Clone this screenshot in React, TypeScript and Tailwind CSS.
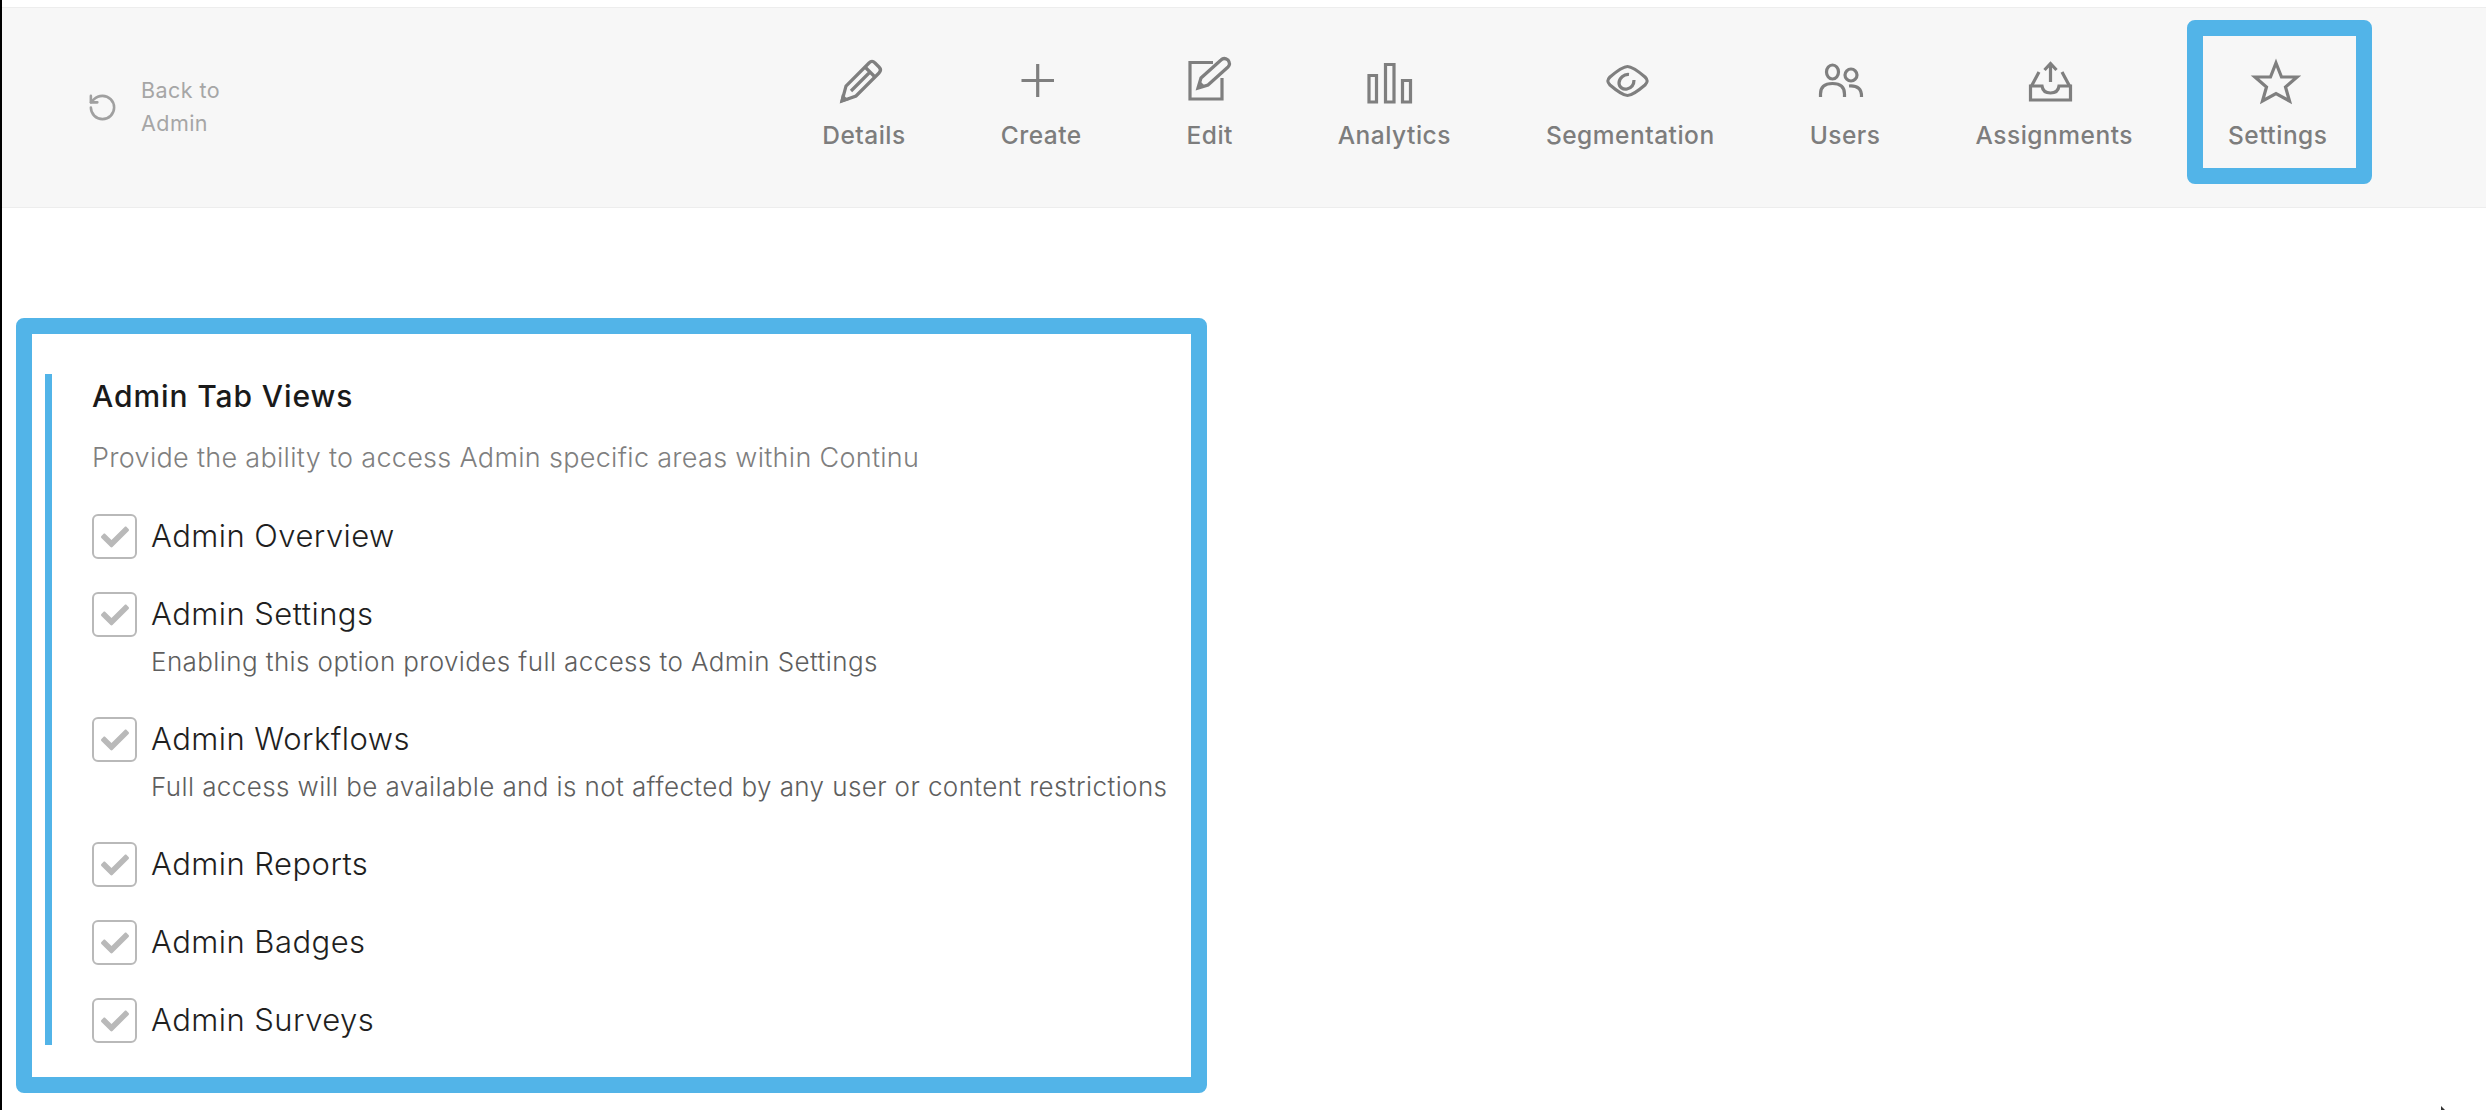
import { RotateCcw } from "lucide-react";
import { FaCheck } from "react-icons/fa";
import type { ReactNode } from "react";

const iconProps = {
  viewBox: "0 0 56 48",
  fill: "none",
  stroke: "#7f7f7f",
  strokeWidth: 3.2,
  className: "h-12 w-14 overflow-visible",
};

const navItems: { label: string; icon: ReactNode }[] = [
  {
    label: "Details",
    icon: (
      <svg {...iconProps}>
        <path d="M6 43 L10 28 L33 5 Q36 2 39 5 L43 9 Q46 12 43 15 L20 38 Z" />
        <path d="M29 9 L39 19 M15 33 L33 15" />
        <path d="M4 45 L6 36 L13 42 Z" fill="#7f7f7f" stroke="none" />
      </svg>
    ),
  },
  {
    label: "Create",
    icon: (
      <svg {...iconProps}>
        <path d="M24.7 6 V39 M8.5 22.5 H41" />
      </svg>
    ),
  },
  {
    label: "Edit",
    icon: (
      <svg {...iconProps}>
        <path d="M31 4.5 H8 V41 H40 V20" />
        <path d="M16 30 L19 20 L39 2 Q42 -1 46 2 Q49 6 46 9 L26 27 Z" />
        <path d="M15 31 L18 23 L23 28 Z" fill="#7f7f7f" stroke="none" />
      </svg>
    ),
  },
  {
    label: "Analytics",
    icon: (
      <svg {...iconProps}>
        <path d="M3 17.5 H10.5 V44 H3 Z M19.5 6.5 H28 V44 H19.5 Z M36.5 22.5 H44.5 V44 H36.5 Z" />
      </svg>
    ),
  },
  {
    label: "Segmentation",
    icon: (
      <svg {...iconProps}>
        <path d="M25.5 8.5 C30 8.5 36 13 43 19 C46 22 46 24 43 27 C36 33 30 37.5 25.5 37.5 C21 37.5 15 33 8 27 C5 24 5 22 8 19 C15 13 21 8.5 25.5 8.5 Z" />
        <path d="M27 16.5 C22 16 17 20 17 25 C17 29 21 32 25 31 C29 30 32 27 32 22" />
      </svg>
    ),
  },
  {
    label: "Users",
    icon: (
      <svg {...iconProps}>
        <ellipse cx="15.5" cy="14" rx="6" ry="7" />
        <ellipse cx="34" cy="17" rx="6" ry="6" />
        <path d="M3.5 39 V36 Q3.5 25.5 15.5 25.5 Q27.5 25.5 27.5 36 V39" />
        <path d="M32 28 Q45 27 44.5 39" />
      </svg>
    ),
  },
  {
    label: "Assignments",
    icon: (
      <svg {...iconProps}>
        <path d="M24.5 24 V6 M18.5 12 L24.5 5.5 L30.5 12" />
        <path d="M13 14 L5.5 28 M36 14 L43.5 28" />
        <path d="M4.5 28 V42 H44.5 V28 H33 Q32 35 24.5 35 Q17 35 16 28 Z" />
      </svg>
    ),
  },
  {
    label: "Settings",
    icon: (
      <svg {...iconProps}>
        <path d="M26 5 L31.5 19 L47 19 L35.5 29 L39.5 43 L26 35.5 L12.5 43 L16.5 29 L5 19 L20.5 19 Z" />
      </svg>
    ),
  },
];

const tabViews = [
  { label: "Admin Overview" },
  { label: "Admin Settings", hint: "Enabling this option provides full access to Admin Settings" },
  { label: "Admin Workflows", hint: "Full access will be available and is not affected by any user or content restrictions" },
  { label: "Admin Reports" },
  { label: "Admin Badges" },
  { label: "Admin Surveys" },
];

export default function App() {
  return (
    <div className="relative h-[1110px] border-l-2 border-black bg-white pt-[7px] font-['Inter',sans-serif]">
      {/* Top nav */}
      <header className="flex h-[201px] items-start border-y border-[#ededed] bg-[#f7f7f7] pt-[50px] pr-[111px] pl-[85px]">
        <div className="mt-4 flex items-center gap-[23px] text-[#a6a6a6]">
          <RotateCcw size={31} strokeWidth={2} color="#a0a0a0" />
          <span className="w-[90px] text-[21.5px] leading-[33px] tracking-[0.45px]">Back to Admin</span>
        </div>
        <nav className="ml-auto flex">
          {navItems.map((item) => (
            <div key={item.label} className="relative flex min-w-[161px] flex-col items-center px-[47.5px]">
              {item.label === "Settings" && (
                <div className="absolute -top-[38px] right-[3px] -bottom-[33px] left-[6px] rounded-lg border-[16px] border-[#52b4e8]" />
              )}
              {item.icon}
              <span className="mt-[13px] text-[24.5px] leading-8 font-medium tracking-[0.5px] text-[#7d7d7d]">
                {item.label}
              </span>
            </div>
          ))}
        </nav>
      </header>

      {/* Permissions card */}
      <main className="pt-[110px] pl-[14px]">
        <section className="box-border w-[1191px] rounded-lg border-[16px] border-[#52b4e8] pt-10 pr-2 pb-8 pl-[13px]">
          <div className="border-l-[7px] border-[#52b4e8] pt-1 pl-10">
            <h2 className="text-[30px] leading-9 font-[550] tracking-[0.9px] text-[#1a1a1a]">Admin Tab Views</h2>
            <p className="mt-[26px] text-[27px] leading-9 font-light tracking-[0.3px] text-[#7f7f7f]">
              Provide the ability to access Admin specific areas within Continu
            </p>
            <ul className="mt-[38px] flex flex-col gap-[33px] pb-[2px]">
              {tabViews.map((view) => (
                <li key={view.label} className="flex gap-[14px]">
                  <span className="flex h-[45px] w-[45px] shrink-0 items-center justify-center rounded-md border-2 border-[#b9b9b9] bg-white">
                    <FaCheck size={28} color="#b9b9b9" />
                  </span>
                  <div>
                    <div className="text-[31px] leading-[43px] font-light tracking-[0.45px] text-[#1f1f1f]">
                      {view.label}
                    </div>
                    {view.hint && (
                      <div className="mt-[10px] pb-[5px] text-[26px] leading-[34px] font-light tracking-[0.4px] whitespace-nowrap text-[#5e5e5e]">
                        {view.hint}
                      </div>
                    )}
                  </div>
                </li>
              ))}
            </ul>
          </div>
        </section>
      </main>

      {/* Stray mouse cursor at the bottom edge */}
      <svg viewBox="0 0 6 6" className="absolute top-[1106px] left-[2439px] h-1 w-1">
        <path d="M0 0 L6 6 H0 Z" fill="#333" />
      </svg>
    </div>
  );
}
